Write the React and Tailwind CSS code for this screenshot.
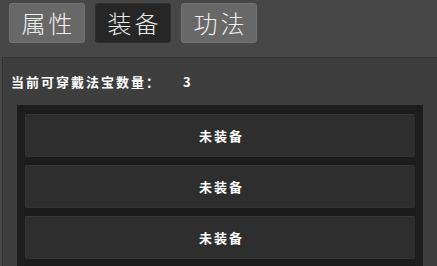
import React from "react";

const cjk = { fontFamily: '"Noto Sans CJK SC", "Noto Sans", sans-serif' };

function Tab({ label, active }) {
  return (
    <div
      className={
        "w-[76px] h-[40px] flex items-center justify-center rounded-[3px] text-[24px] leading-none tracking-[3px] " +
        (active
          ? "bg-[#262626] border border-[#2e2e2e] text-[#e8e8e8]"
          : "bg-[#686868] border border-[#737373] text-[#eeeeee]")
      }
      style={cjk}
    >
      <span className="font-light pl-[3px]">{label}</span>
    </div>
  );
}

function Row() {
  return (
    <div
      className="h-[43px] flex items-center justify-center bg-[#2e2e2e] border-t border-l border-[#363636] border-b border-b-[#333] rounded-[2px] text-[13px] font-bold text-white tracking-[2px]"
      style={cjk}
    >
      <span className="pl-[2px]">未装备</span>
    </div>
  );
}

export default function App() {
  return (
    <div className="w-[437px] h-[266px] overflow-hidden bg-[#474747] flex flex-col">
      <div className="flex gap-[10px] pl-[9px] pt-[3px] h-[57px]">
        <Tab label="属性" />
        <Tab label="装备" active />
        <Tab label="功法" />
      </div>
      <div className="flex-1 ml-[2px] bg-[#3e3e3e] border-t border-l border-[#333333] flex flex-col">
        <div
          className="h-[47px] flex items-center pl-[8px] text-[13px] font-bold text-white"
          style={cjk}
        >
          <span className="tracking-[2px]">当前可穿戴法宝数量：</span>
          <span className="ml-[22px]">3</span>
        </div>
        <div className="ml-[14px] mr-[14px] bg-[#1c1c1c] pt-[9px] px-[8px] flex flex-col gap-[8px] flex-1">
          <Row />
          <Row />
          <Row />
        </div>
      </div>
    </div>
  );
}
